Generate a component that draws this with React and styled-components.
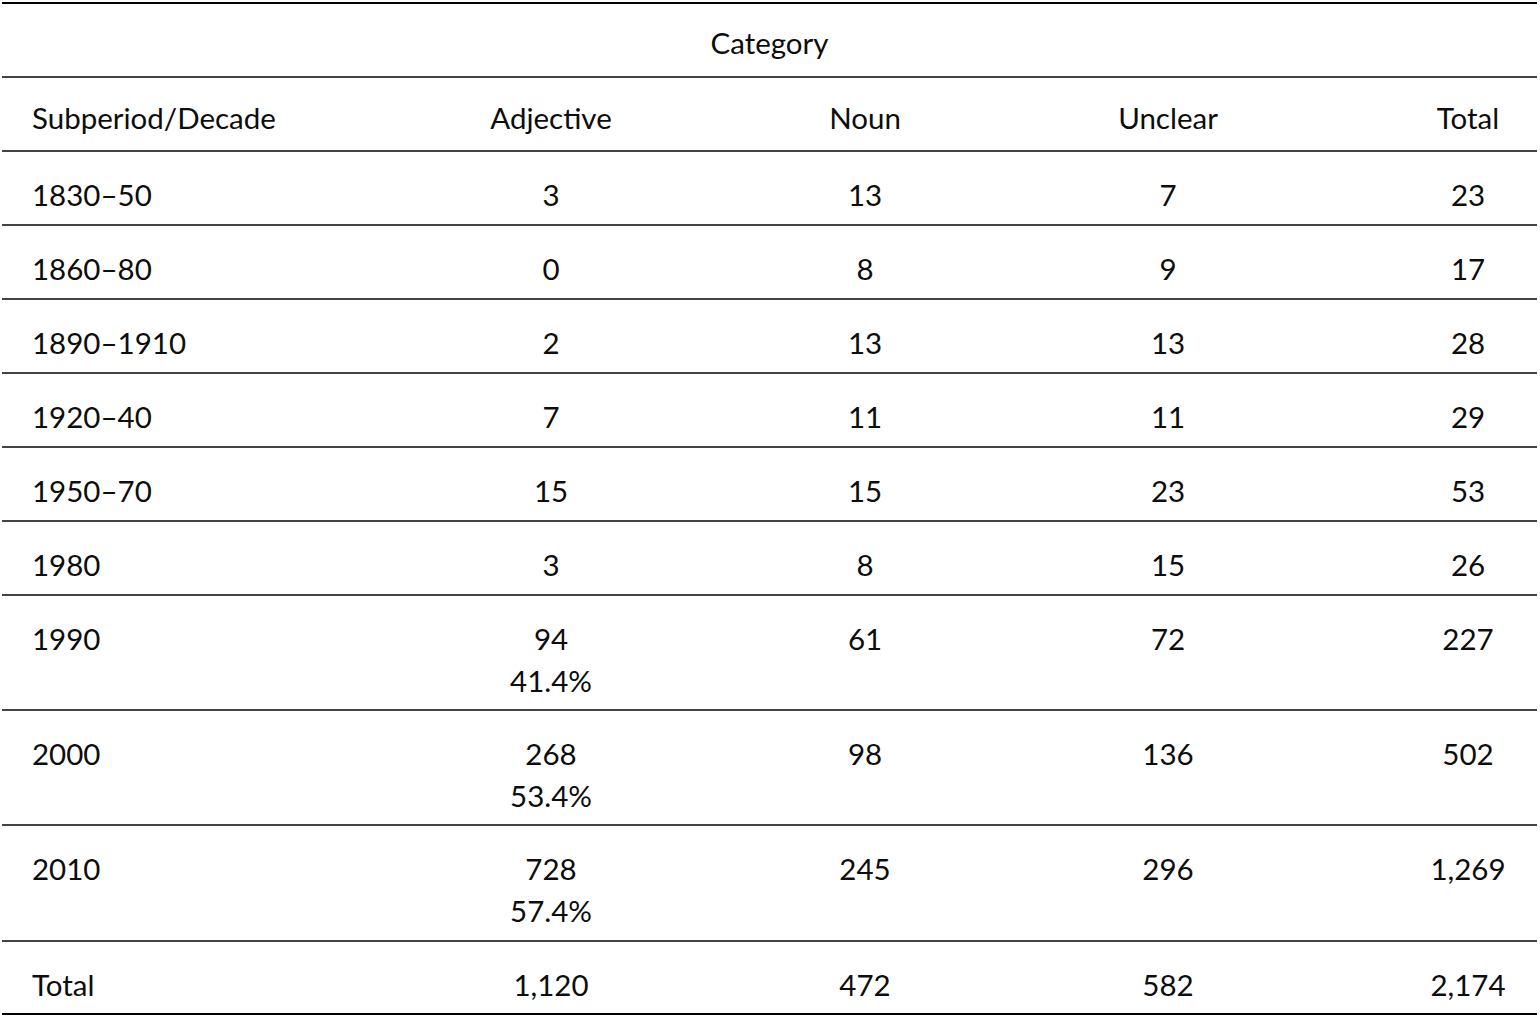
import React from "react";
import styled, { createGlobalStyle } from "styled-components";

const GlobalStyle = createGlobalStyle`
  html, body {
    margin: 0;
    padding: 0;
    background: #ffffff;
  }
  body {
    font-family: "Lato", "Open Sans", sans-serif;
    color: #0d0d0d;
  }
`;

const COLUMNS = "307px 484px 144px 462px 138px";

const Table = styled.div`
  margin: 2px 0 0 2px;
  width: 1535px;
  border-top: 2px solid #000000;
  border-bottom: 2px solid #000000;
  display: flex;
  flex-direction: column;
`;

const Row = styled.div`
  display: grid;
  grid-template-columns: ${p => (p.$span ? "1fr" : COLUMNS)};
  height: ${p => p.$height}px;
  box-sizing: border-box;
  border-bottom: ${p => (p.$last ? "none" : "2px solid #444444")};
`;

const Cell = styled.div`
  box-sizing: border-box;
  padding-top: ${p => (p.$top ? p.$top : 22)}px;
  padding-left: ${p => (p.$left ? "30px" : "0")};
  text-align: ${p => (p.$left ? "left" : "center")};
  font-size: 29.5px;
  line-height: 42px;
  white-space: nowrap;
`;

const Line = styled.div``;

const rows = [
  ["1830–50", ["3"], "13", "7", "23"],
  ["1860–80", ["0"], "8", "9", "17"],
  ["1890–1910", ["2"], "13", "13", "28"],
  ["1920–40", ["7"], "11", "11", "29"],
  ["1950–70", ["15"], "15", "23", "53"],
  ["1980", ["3"], "8", "15", "26"],
  ["1990", ["94", "41.4%"], "61", "72", "227"],
  ["2000", ["268", "53.4%"], "98", "136", "502"],
  ["2010", ["728", "57.4%"], "245", "296", "1,269"]
];

const heights = [74, 74, 74, 74, 74, 74, 115, 115, 116];

export default function App() {
  return (
    <>
      <GlobalStyle />
      <Table>
        <Row $span $height={74}>
          <Cell $top={18}>Category</Cell>
        </Row>
        <Row $height={74}>
          <Cell $left $top={19}>Subperiod/Decade</Cell>
          <Cell $top={19}>Adjective</Cell>
          <Cell $top={19}>Noun</Cell>
          <Cell $top={19}>Unclear</Cell>
          <Cell $top={19}>Total</Cell>
        </Row>
        {rows.map((r, i) => (
          <Row key={r[0]} $height={heights[i]}>
            <Cell $left>{r[0]}</Cell>
            <Cell>
              {r[1].map(v => (
                <Line key={v}>{v}</Line>
              ))}
            </Cell>
            <Cell>{r[2]}</Cell>
            <Cell>{r[3]}</Cell>
            <Cell>{r[4]}</Cell>
          </Row>
        ))}
        <Row $height={71} $last>
          <Cell $left>Total</Cell>
          <Cell>1,120</Cell>
          <Cell>472</Cell>
          <Cell>582</Cell>
          <Cell>2,174</Cell>
        </Row>
      </Table>
    </>
  );
}
